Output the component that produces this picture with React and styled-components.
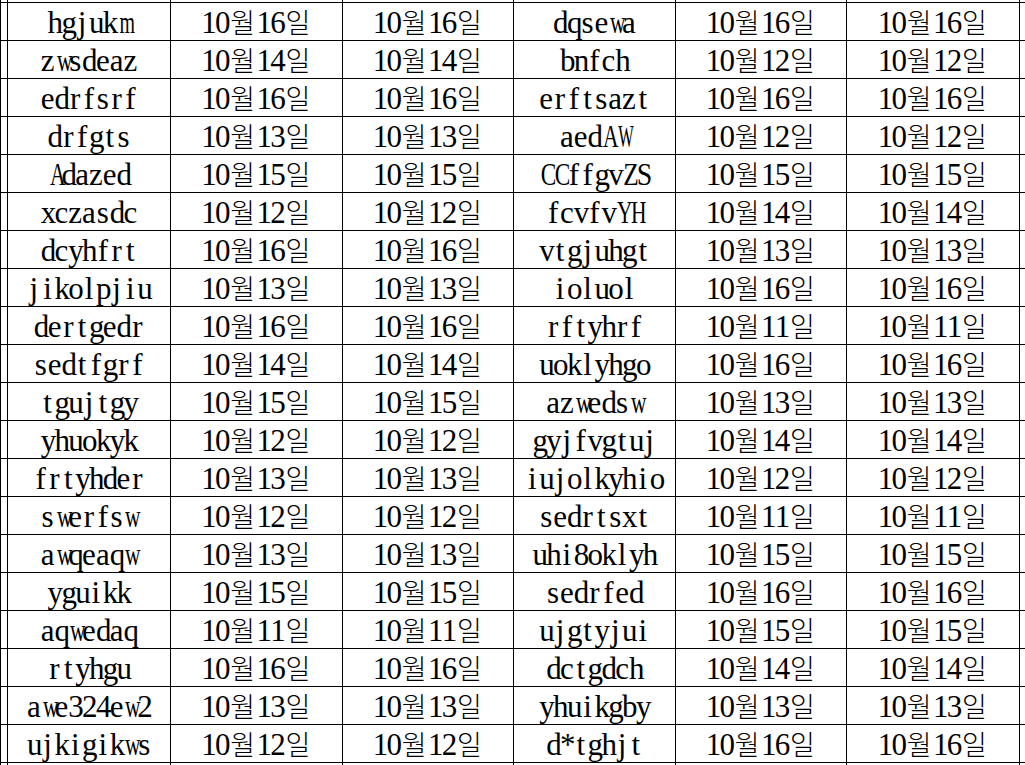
import React from "react";
import styled, { createGlobalStyle } from "styled-components";

const GlobalStyle = createGlobalStyle`
  html, body {
    margin: 0;
    padding: 0;
    background: #ffffff;
  }
  body {
    font-family: "Liberation Serif", "Noto Sans CJK KR", serif;
  }
`;

const Sheet = styled.div`
  width: 1025px;
  height: 765px;
  overflow: hidden;
  background: #ffffff;
`;

const Grid = styled.table`
  border-collapse: collapse;
  table-layout: fixed;
  width: 1025px;
  margin-top: -36px;
`;

const Row = styled.tr`
  height: 38px;
`;

const Cell = styled.td`
  height: 38px;
  box-sizing: border-box;
  border: 1px solid #000000;
  padding: 0;
  text-align: center;
  vertical-align: top;
  white-space: nowrap;
  overflow: hidden;
  color: #000000;
  font-family: "Liberation Serif", serif;
  font-size: 31px;
  line-height: 36px;
`;

// half-width cell, like a fixed-pitch sheet font
const Glyph = styled.span`
  display: inline-block;
  width: 13.8px;
  text-align: center;
  font-family: "Liberation Serif", serif;
  font-size: 31px;
  line-height: 36px;
  transform: translateY(1.5px) scaleX(${(p) => p.$sx || 1});
`;

const Hangul = styled.span`
  display: inline-block;
  width: 27.6px;
  text-align: center;
  font-family: "Noto Sans CJK KR", "Noto Sans CJK SC", sans-serif;
  font-size: 27px;
  font-weight: 300;
  line-height: 30px;
  transform: translateY(1.5px);
`;

const advance = {
  m: 0.778, w: 0.722, A: 0.722, C: 0.667, H: 0.722, S: 0.556,
  V: 0.722, W: 0.944, Y: 0.722, Z: 0.611,
};

function Mono({ text }) {
  return (
    <>
      {String(text).split("").map((ch, i) => {
        const a = advance[ch];
        return (
          <Glyph key={i} $sx={a ? 0.5 / a : 1}>{ch}</Glyph>
        );
      })}
    </>
  );
}

const widths = [7, 163, 172, 171, 162, 171, 173, 6];

const rows = [
  ["hgjukm", 16, "dqsewa", 16],
  ["zwsdeaz", 14, "bnfch", 12],
  ["edrfsrf", 16, "erftsazt", 16],
  ["drfgts", 13, "aedAW", 12],
  ["Adazed", 15, "CCffgvZS", 15],
  ["xczasdc", 12, "fcvfvYH", 14],
  ["dcyhfrt", 16, "vtgjuhgt", 13],
  ["jikolpjiu", 13, "ioluol", 16],
  ["dertgedr", 16, "rftyhrf", 11],
  ["sedtfgrf", 14, "uoklyhgo", 16],
  ["tgujtgy", 15, "azwedsw", 13],
  ["yhuokyk", 12, "gyjfvgtuj", 14],
  ["frtyhder", 13, "iujolkyhio", 12],
  ["swerfsw", 12, "sedrtsxt", 11],
  ["awqeaqw", 13, "uhi8oklyh", 15],
  ["yguikk", 15, "sedrfed", 16],
  ["aqwedaq", 11, "ujgtyjui", 15],
  ["rtyhgu", 16, "dctgdch", 14],
  ["awe324ew2", 13, "yhuikgby", 13],
  ["ujkigikws", 12, "d*tghjt", 16],
];

function DateText({ day }) {
  return (
    <>
      <Mono text="10" />
      <Hangul>월</Hangul>
      <Mono text={day} />
      <Hangul>일</Hangul>
    </>
  );
}

function BlankRow() {
  return (
    <Row>
      {widths.map((w, i) => <Cell key={i} />)}
    </Row>
  );
}

export default function App() {
  return (
    <Sheet>
      <GlobalStyle />
      <Grid>
        <colgroup>
          {widths.map((w, i) => <col key={i} style={{ width: w }} />)}
        </colgroup>
        <tbody>
          <BlankRow />
          {rows.map((r, i) => (
            <Row key={i}>
              <Cell />
              <Cell><Mono text={r[0]} /></Cell>
              <Cell><DateText day={r[1]} /></Cell>
              <Cell><DateText day={r[1]} /></Cell>
              <Cell><Mono text={r[2]} /></Cell>
              <Cell><DateText day={r[3]} /></Cell>
              <Cell><DateText day={r[3]} /></Cell>
              <Cell />
            </Row>
          ))}
          <BlankRow />
        </tbody>
      </Grid>
    </Sheet>
  );
}
